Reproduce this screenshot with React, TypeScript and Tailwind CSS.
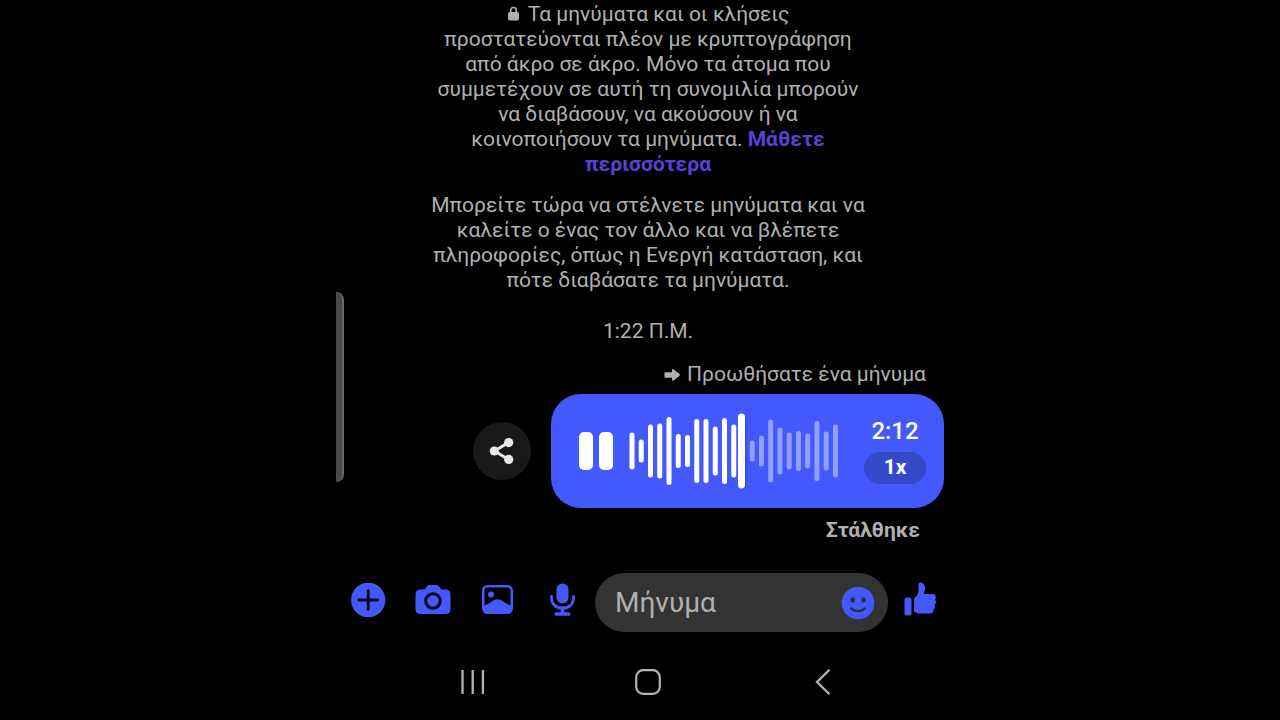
const PLAYED = [37, 23, 53, 55, 68, 34, 32, 64, 64, 49, 66, 53];
const REMAINING = [21, 31, 63, 47, 37, 40, 35, 60, 39, 53];

function Waveform() {
  const mid = 38;
  return (
    <svg width="210" height="76" viewBox="0 0 210 76" aria-hidden="true">
      {PLAYED.map((h, i) => (
        <rect key={i} x={0.5 + i * 9.25} y={mid - h / 2} width="5" height={h} rx="2.5" fill="#fff" />
      ))}
      {REMAINING.map((h, i) => (
        <rect key={i} x={120.7 + i * 9.25} y={mid - h / 2} width="5" height={h} rx="2.5" fill="#91a0fb" />
      ))}
      <rect x="110" y="1.5" width="7.5" height="74.5" rx="3.5" fill="#1d2fa0" opacity="0.35" />
      <rect x="109" y="0.5" width="7" height="75" rx="3.5" fill="#fff" />
    </svg>
  );
}

function LockIcon() {
  return (
    <svg className="mr-2 inline-block align-baseline" width="13" height="15" viewBox="0 0 13 15" aria-hidden="true">
      <rect x="1" y="6" width="11" height="8.5" rx="2" fill="#b0b0b0" />
      <path d="M3.7 7V4.3a2.8 2.8 0 0 1 5.6 0V7" fill="none" stroke="#b0b0b0" strokeWidth="1.7" />
    </svg>
  );
}

function ForwardIcon() {
  return (
    <svg width="17" height="14" viewBox="0 0 17 14" aria-hidden="true">
      <path d="M1.4 4.2H8V2.1c0-1 1-1.3 1.7-.7l5.8 4.7c.6.5.6 1.2 0 1.7l-5.8 4.7c-.7.6-1.7.3-1.7-.7V9.8H1.4C.8 9.8.5 9.5.5 9V5c0-.5.3-.8.9-.8z" fill="#b0b0b0" />
    </svg>
  );
}

function ShareIcon() {
  return (
    <svg width="26" height="28" viewBox="0 0 26 28" aria-hidden="true">
      <path d="M19.5 5.5 5.5 14l14 8.5" fill="none" stroke="#e8e8e8" strokeWidth="3" />
      <circle cx="5.3" cy="14" r="4.6" fill="#e8e8e8" />
      <circle cx="19.7" cy="5.6" r="4.6" fill="#e8e8e8" />
      <circle cx="19.7" cy="22.4" r="4.6" fill="#e8e8e8" />
    </svg>
  );
}

function PlusIcon() {
  return (
    <svg width="36" height="36" viewBox="0 0 36 36" aria-hidden="true">
      <circle cx="18.2" cy="18" r="17.2" fill="#4459fb" />
      <path d="M18.2 8.6v18.8M8.8 18h18.8" stroke="#05081c" strokeWidth="2.8" strokeLinecap="round" />
    </svg>
  );
}

function CameraIcon() {
  return (
    <svg width="36" height="36" viewBox="0 0 36 36" aria-hidden="true">
      <path d="M5.5 7.5h3c1 0 1.7-.4 2.2-1.2l1.1-1.7C12.4 3.5 13.3 3 14.5 3h7c1.2 0 2.1.5 2.7 1.6l1.1 1.7c.5.8 1.2 1.2 2.2 1.2h3c3.2 0 5 1.8 5 5V27c0 3.2-1.8 5-5 5h-25c-3.2 0-5-1.8-5-5V12.5c0-3.2 1.8-5 5-5z" fill="#4459fb" />
      <circle cx="18" cy="19" r="7.3" fill="#4459fb" stroke="#05081c" strokeWidth="3" />
    </svg>
  );
}

function PhotoIcon() {
  return (
    <svg width="36" height="36" viewBox="0 0 36 36" aria-hidden="true">
      <rect x="3.2" y="4.2" width="28.6" height="26.6" rx="4.5" fill="none" stroke="#4459fb" strokeWidth="2.6" />
      <circle cx="11" cy="12.5" r="3" fill="#4459fb" />
      <path d="M3 24c2.5-1 4.7-2 7-3.3 1.7-1 3-1.7 4.4-2.6 2-1.2 4.2-1.2 6.2 0 1.4.9 2.7 1.6 4.4 2.6 2.3 1.3 4.5 2.3 7 3.3v3c0 3-1.5 4.5-4.5 4.5h-20C4.5 31.5 3 30 3 27z" fill="#4459fb" />
    </svg>
  );
}

function MicIcon() {
  return (
    <svg width="36" height="36" viewBox="0 0 36 36" aria-hidden="true">
      <rect x="11.5" y="1.5" width="12" height="20" rx="6" fill="#4459fb" />
      <path d="M6.500 14.500v1.500c0 6 4.500 10.200 11 10.200s11-4.200 11-10.200v-1.500" fill="none" stroke="#4459fb" strokeWidth="2.800" strokeLinecap="round" />
      <path d="M17.500 26v6M11.200 32h12.600" stroke="#4459fb" strokeWidth="3.600" strokeLinecap="round" />
    </svg>
  );
}

function SmileIcon() {
  return (
    <svg width="34" height="34" viewBox="0 0 34 34" aria-hidden="true">
      <circle cx="17" cy="17" r="16.3" fill="#4459fb" />
      <ellipse cx="11.6" cy="14" rx="2.3" ry="2.8" fill="#2a2c45" />
      <ellipse cx="22.4" cy="14" rx="2.3" ry="2.8" fill="#2a2c45" />
      <path d="M10 22.3c3.8 3.8 10.2 3.8 14 0" fill="none" stroke="#2a2c45" strokeWidth="2.2" strokeLinecap="round" />
    </svg>
  );
}

function ThumbIcon() {
  return (
    <svg width="36" height="36" viewBox="0 0 36 36" aria-hidden="true">
      <rect x="2.5" y="15.5" width="7" height="18" rx="2.2" fill="#4459fb" />
      <path d="M12 18.500c0-1.700.6-2.600 1.900-3.800 1.700-1.600 2.600-3.600 2.600-6.200V2.700c0-1.500 1-2.300 2.200-2.300 2.600 0 4.300 2.500 4.300 5.600 0 2.300-.5 4.200-1.200 6h8.700c2.300 0 3.300 1.400 3.300 3.300 0 1.200-.2 2-.9 2.600.9.600 1.200 1.500 1 2.700-.1 1.100-.7 2-1.500 2.400.7.700.8 1.600.5 2.600-.3.900-.8 1.600-1.600 1.900.3.800.2 1.600-.3 2.400-.6 1-1.700 1.600-3.200 1.600H20c-3.300 0-5.400-.4-6.900-1.200-.8-.4-1.100-1-1.100-2z" fill="#4459fb" />
    </svg>
  );
}

const iconButton = "flex h-[54px] w-9 shrink-0 items-center justify-center";

export default function App() {
  return (
    <div className="min-h-screen bg-black font-['Roboto','Noto_Sans',sans-serif] text-[21px] leading-[25px] text-[#b0b0b0]">
      <main className="relative mx-auto flex min-h-screen w-full max-w-[608px] flex-col overflow-hidden">
        <div className="absolute left-0 top-[292px] h-[190px] w-2 rounded-r-lg border-r-2 border-[#6a6a6a] bg-[#4a4a4a]" />

        <section className="flex flex-col items-center pl-4 pt-[2px] text-center">
          <p className="max-w-[436px]">
            <LockIcon />
            Τα μηνύματα και οι κλήσεις προστατεύονται πλέον με κρυπτογράφηση από άκρο σε άκρο. Μόνο τα άτομα που
            συμμετέχουν σε αυτή τη συνομιλία μπορούν να διαβάσουν, να ακούσουν ή να κοινοποιήσουν τα μηνύματα.{" "}
            <a href="#more" className="font-bold text-[#5a41d6]">Μάθετε περισσότερα</a>
          </p>
          <p className="mt-4 max-w-[436px]">
            Μπορείτε τώρα να στέλνετε μηνύματα και να καλείτε ο ένας τον άλλο και να βλέπετε πληροφορίες, όπως η
            Ενεργή κατάσταση, και πότε διαβάσατε τα μηνύματα.
          </p>
          <time className="mt-[26px]">1:22 Π.Μ.</time>
        </section>

        <section className="mt-[18px] flex flex-col items-end">
          <p className="flex items-center gap-[6px] pr-[18px]">
            <ForwardIcon />
            Προωθήσατε ένα μήνυμα
          </p>
          <div className="mt-[7px] flex items-center gap-5">
            <button aria-label="Κοινοποίηση" className="flex size-[58px] items-center justify-center rounded-full bg-[#19191a]">
              <ShareIcon />
            </button>
            <div className="flex h-[114px] items-center rounded-[30px] bg-[#4459fb] pl-7 pr-[18px] text-white">
              <button aria-label="Παύση" className="flex gap-[6px]">
                <span className="h-[38px] w-[14px] rounded-[5px] bg-white" />
                <span className="h-[38px] w-[14px] rounded-[5px] bg-white" />
              </button>
              <div className="ml-4 mr-[25px]">
                <Waveform />
              </div>
              <div className="flex flex-col items-center gap-2 font-medium">
                <span className="text-2xl leading-[25px]">2:12</span>
                <button className="h-8 w-[62px] rounded-full bg-[#3548c8] font-bold">1x</button>
              </div>
            </div>
          </div>
          <p className="mt-[10px] pr-6 font-bold">Στάλθηκε</p>
        </section>

        <form className="mt-[30px] flex items-start pl-[14px] pr-[6px]" onSubmit={(e) => e.preventDefault()}>
          <div className="flex gap-[29px]">
            <button type="button" aria-label="Περισσότερα" className={iconButton}><PlusIcon /></button>
            <button type="button" aria-label="Κάμερα" className={iconButton}><CameraIcon /></button>
            <button type="button" aria-label="Φωτογραφίες" className={iconButton}><PhotoIcon /></button>
            <button type="button" aria-label="Μικρόφωνο" className={iconButton}><MicIcon /></button>
          </div>
          <div className="mx-[14px] flex h-[59px] min-w-0 flex-1 items-center rounded-full bg-[#333333] pl-5 pr-[13px]">
            <input
              type="text"
              aria-label="Μήνυμα"
              placeholder="Μήνυμα"
              className="h-full min-w-0 flex-1 bg-transparent text-[28px] outline-none placeholder:text-[#b0b0b0]"
            />
            <button type="button" aria-label="Emoji"><SmileIcon /></button>
          </div>
          <button type="button" aria-label="Μου αρέσει" className={iconButton}><ThumbIcon /></button>
        </form>

        <nav className="mt-[34px] grid grid-cols-3 justify-items-center pl-[50px] pr-[34px]">
          <button aria-label="Πρόσφατα">
            <svg width="32" height="32" viewBox="0 0 32 32" aria-hidden="true">
              <path d="M5.500 4v24M15.700 4v24M25.900 4v24" stroke="#b4b4b4" strokeWidth="2.300" />
            </svg>
          </button>
          <button aria-label="Αρχική">
            <svg width="32" height="32" viewBox="0 0 32 32" aria-hidden="true">
              <rect x="4.2" y="4.2" width="23.6" height="23.6" rx="7" fill="none" stroke="#b4b4b4" strokeWidth="2.2" />
            </svg>
          </button>
          <button aria-label="Πίσω">
            <svg width="32" height="32" viewBox="0 0 32 32" aria-hidden="true">
              <path d="M22.500 3.800 10 16l12.500 12.200" fill="none" stroke="#b4b4b4" strokeWidth="2.300" />
            </svg>
          </button>
        </nav>
      </main>
    </div>
  );
}
